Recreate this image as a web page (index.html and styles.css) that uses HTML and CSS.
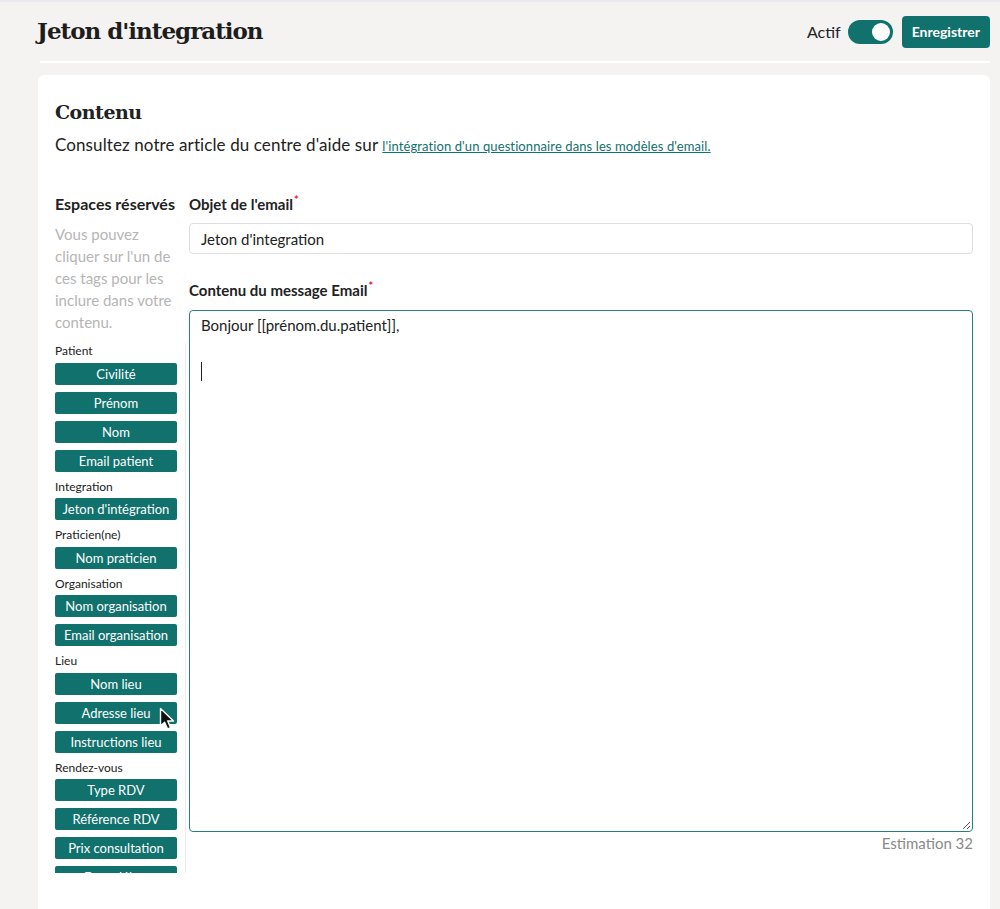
FILE: index.html
```html
<!DOCTYPE html>
<html lang="fr">

<head>
    <meta charset="UTF-8">
    <meta name="viewport" content="width=device-width, initial-scale=1.0">
    <title>Jeton d'integration</title>
    <link rel="stylesheet" href="styles.css">
</head>

<body>
    <div class="topline"></div>
    <div class="page">
        <header class="header">
            <h1>Jeton d'integration</h1>
            <div class="actions">
                <span class="toggle-label">Actif</span>
                <span class="toggle"><span class="knob"></span></span>
                <button class="btn-save">Enregistrer</button>
            </div>
        </header>

        <div class="card">
            <h2>Contenu</h2>
            <p class="intro">Consultez notre article du centre d'aide sur <a href="#">l'intégration d'un questionnaire dans les modèles d'email.</a></p>

            <div class="columns">
                <!-- Placeholder tags -->
                <aside class="placeholders">
                    <h3>Espaces réservés</h3>
                    <p class="hint">Vous pouvez cliquer sur l'un de ces tags pour les inclure dans votre contenu.</p>
                    <div class="tag-list">
                        <div class="group-label">Patient</div>
                        <button class="tag">Civilité</button>
                        <button class="tag">Prénom</button>
                        <button class="tag">Nom</button>
                        <button class="tag">Email patient</button>
                        <div class="group-label">Integration</div>
                        <button class="tag">Jeton d'intégration</button>
                        <div class="group-label">Praticien(ne)</div>
                        <button class="tag">Nom praticien</button>
                        <div class="group-label">Organisation</div>
                        <button class="tag">Nom organisation</button>
                        <button class="tag">Email organisation</button>
                        <div class="group-label">Lieu</div>
                        <button class="tag">Nom lieu</button>
                        <button class="tag hovered">Adresse lieu
                            <svg class="pointer" width="18" height="24" viewBox="0 0 18 24">
                                <path d="M1.5 1.5 L1.5 19 L5.6 15.2 L8.6 22 L11.6 20.7 L8.7 14 L14.5 14 Z" fill="#111" stroke="#fff" stroke-width="1.4" stroke-linejoin="round" />
                            </svg>
                        </button>
                        <button class="tag">Instructions lieu</button>
                        <div class="group-label">Rendez-vous</div>
                        <button class="tag">Type RDV</button>
                        <button class="tag">Référence RDV</button>
                        <button class="tag">Prix consultation</button>
                        <button class="tag">Date début</button>
                    </div>
                </aside>

                <div class="form">
                    <label class="field-label" for="subject">Objet de l'email<span class="req">*</span></label>
                    <input type="text" id="subject" class="input" value="Jeton d'integration" />

                    <label class="field-label second" for="body">Contenu du message Email<span class="req">*</span></label>
                    <div class="editor" id="body">
                        <p>Bonjour [[prénom.du.patient]],</p>
                        <p><span class="caret"></span></p>
                        <svg class="resize" width="9" height="9" viewBox="0 0 9 9">
                            <path d="M8 1 L1 8 M8 5 L5 8" stroke="#555" stroke-width="1" />
                        </svg>
                    </div>
                    <div class="estimate">Estimation 32</div>
                </div>
            </div>
        </div>
    </div>
</body>

</html>
```

FILE: styles.css
```css
body {
    margin: 0;
    background-color: #f5f3f1;
    font-family: Lato, 'Noto Sans', sans-serif;
    color: #222;
    height: 909px;
    overflow: hidden;
}

.topline {
    height: 2px;
    background-color: #e9e9ee;
}

.page {
    padding: 0 10px 0 37px;
}

.header {
    height: 59px;
    display: flex;
    align-items: center;
    justify-content: space-between;
    border-bottom: 2px solid #fff;
    margin-left: 3px;
}

.header h1 {
    margin: -2px 0 0 -3px;
    font-family: 'DejaVu Serif', serif;
    font-size: 23px;
    font-weight: bold;
    letter-spacing: -1px;
    color: #1d1d1d;
}

.actions {
    display: flex;
    align-items: center;
}

.toggle-label {
    font-size: 16px;
    color: #222;
    margin-right: 7px;
}

.toggle {
    width: 45px;
    height: 24px;
    border-radius: 12px;
    background-color: #11716d;
    position: relative;
    margin-right: 9px;
}

.knob {
    position: absolute;
    right: 3px;
    top: 3px;
    width: 18px;
    height: 18px;
    border-radius: 50%;
    background-color: #fff;
}

.btn-save {
    background-color: #11716d;
    color: #fff;
    border: none;
    border-radius: 4px;
    height: 32px;
    padding: 0 10px;
    font-family: Lato, sans-serif;
    font-size: 14px;
    font-weight: bold;
}

.card {
    margin-top: 12px;
    margin-left: 1px;
    background-color: #fff;
    border-radius: 6px 6px 0 0;
    padding: 25px 17px 0 17px;
    height: 820px;
}

.card h2 {
    margin: 0;
    font-family: 'DejaVu Serif', serif;
    font-size: 19px;
    font-weight: bold;
    letter-spacing: -0.5px;
    line-height: 24px;
}

.intro {
    margin: 10px 0 0 0;
    font-size: 17px;
    line-height: 22px;
    letter-spacing: 0.1px;
    color: #222;
}

.intro a {
    color: #11716d;
    font-size: 13px;
    letter-spacing: 0.1px;
}

.columns {
    display: grid;
    grid-template-columns: 131px 1fr;
    column-gap: 3px;
    margin-top: 37px;
}

.placeholders h3 {
    margin: 0;
    font-size: 16px;
    font-weight: bold;
    line-height: 20px;
    color: #222;
}

.hint {
    margin: 9px 0 0 0;
    font-size: 15px;
    line-height: 22px;
    color: #b5b5b5;
    width: 122px;
}

.tag-list {
    margin-top: 10px;
    height: 530px;
    overflow: hidden;
    border-right: 1px solid #ececec;
}

.group-label {
    font-size: 12px;
    line-height: 15.5px;
    color: #222;
    margin-bottom: 4px;
}

.tag {
    display: block;
    width: 122px;
    height: 22px;
    margin-bottom: 7px;
    padding: 0;
    border: none;
    border-radius: 2px;
    background-color: #11716d;
    color: #fff;
    font-family: Lato, sans-serif;
    font-size: 13px;
    text-align: center;
    position: relative;
}

.pointer {
    position: absolute;
    left: 104px;
    top: 5px;
}

.field-label {
    display: block;
    font-size: 15px;
    font-weight: bold;
    line-height: 20px;
    color: #222;
}

.field-label.second {
    margin-top: 26px;
}

.req {
    color: #e0202a;
    font-size: 11px;
    vertical-align: top;
    position: relative;
    top: -4px;
    margin-left: 1px;
}

.input {
    display: block;
    width: 100%;
    box-sizing: border-box;
    height: 31px;
    margin-top: 9px;
    padding: 0 11px;
    border: 1px solid #dedee2;
    border-radius: 4px;
    font-family: Lato, sans-serif;
    font-size: 15px;
    color: #222;
}

.editor {
    margin-top: 10px;
    height: 522px;
    box-sizing: border-box;
    border: 1px solid #2a7f7b;
    border-radius: 4px;
    padding: 4px 11px;
    font-size: 15px;
    line-height: 20px;
    position: relative;
}

.editor p {
    margin: 0 0 24px 0;
}

.caret {
    display: inline-block;
    width: 1px;
    height: 19px;
    background-color: #222;
    vertical-align: middle;
}

.resize {
    position: absolute;
    right: 1px;
    bottom: 1px;
}

.estimate {
    text-align: right;
    margin-top: 2px;
    font-size: 15px;
    color: #8a8a8a;
}
```
